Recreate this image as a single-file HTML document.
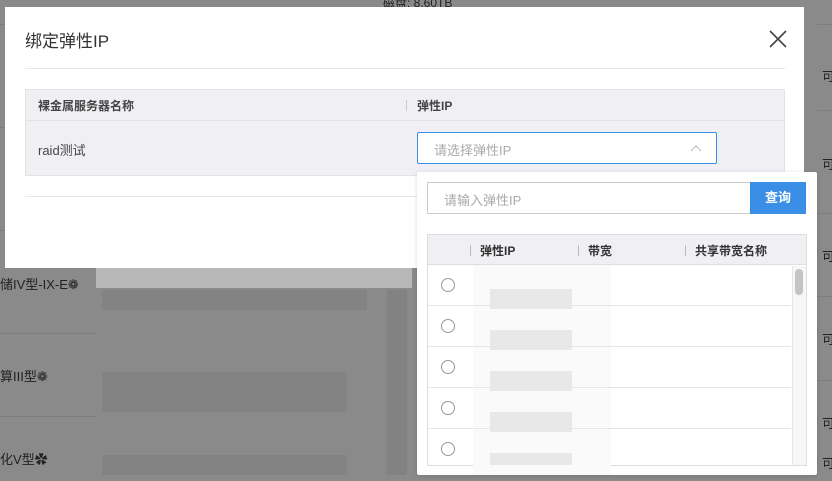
<!DOCTYPE html>
<html><head><meta charset="utf-8"><style>
*{margin:0;padding:0;box-sizing:border-box}
body{width:832px;height:481px;overflow:hidden;background:#8a8a8a;font-family:"Liberation Sans","Noto Sans CJK SC",sans-serif;position:relative;font-size:13px;color:#333}
.a{position:absolute}
.bgt{color:#222;font-size:13px}
.hl{height:1px;background:#7d7d7d}
.blk{background:#7f7f7f}
</style></head><body>
<!-- background -->
<div class="a hl" style="left:0;top:24px;width:96px"></div>
<div class="a hl" style="left:0;top:127px;width:96px"></div>
<div class="a hl" style="left:0;top:230px;width:96px"></div>
<div class="a hl" style="left:0;top:333px;width:96px"></div>
<div class="a hl" style="left:0;top:416px;width:96px"></div>
<div class="a hl" style="left:817px;top:24px;width:15px"></div>
<div class="a hl" style="left:817px;top:110px;width:15px"></div>
<div class="a hl" style="left:817px;top:213px;width:15px"></div>
<div class="a hl" style="left:817px;top:296px;width:15px"></div>
<div class="a hl" style="left:817px;top:380px;width:15px"></div>
<div class="a bgt" style="left:0;top:274px">储IV型-IX-E❁</div>
<div class="a bgt" style="left:0;top:366px">算III型❁</div>
<div class="a bgt" style="left:0;top:449px">化V型✿</div>
<div class="a bgt" style="left:822px;top:66px">可</div>
<div class="a bgt" style="left:822px;top:154px">可</div>
<div class="a bgt" style="left:822px;top:246px">可</div>
<div class="a bgt" style="left:822px;top:329px">可</div>
<div class="a bgt" style="left:822px;top:413px">可</div>
<div class="a bgt" style="left:822px;top:453px">可</div>
<div class="a" style="left:96px;top:268px;width:316px;height:20px;background:#b8b8b8"></div>
<div class="a blk" style="left:102px;top:290px;width:265px;height:20px;opacity:.6"></div>
<div class="a blk" style="left:102px;top:372px;width:245px;height:40px;opacity:.6"></div>
<div class="a blk" style="left:102px;top:455px;width:245px;height:20px;opacity:.6"></div>
<div class="a blk" style="left:387px;top:290px;width:20px;height:185px;opacity:.7"></div>
<div class="a bgt" style="left:383px;top:0;font-size:12px;line-height:7px">磁盘: 8.60TB</div>
<!-- modal -->
<div class="a" style="left:5px;top:7px;width:799px;height:261px;background:#fff">
 <div class="a" style="left:20px;top:20px;font-size:17px;color:#333">绑定弹性IP</div>
 <svg class="a" style="left:763px;top:22px" width="20" height="20"><path d="M2 2L18 18M18 2L2 18" stroke="#444" stroke-width="1.6"/></svg>
 <div class="a" style="left:20px;top:61px;width:760px;height:1px;background:#e8e8e8"></div>
 <div class="a" style="left:20px;top:82px;width:760px;height:87px;border:1px solid #e3e3e6;background:#f0f0f4">
  <div class="a" style="left:0;top:30px;width:758px;height:1px;background:#e3e3e6"></div>
  <div class="a" style="left:12px;top:7px;font-weight:bold;font-size:12px;color:#444">裸金属服务器名称</div>
  <div class="a" style="left:380px;top:10px;width:1px;height:11px;background:#ccc"></div>
  <div class="a" style="left:391px;top:7px;font-weight:bold;font-size:12px;color:#444">弹性IP</div>
  <div class="a" style="left:12px;top:50px;font-size:13px;color:#444">raid测试</div>
  <div class="a" style="left:391px;top:42px;width:300px;height:32px;border:1px solid #3a8ee6;background:#fff;border-radius:2px">
   <div class="a" style="left:16px;top:7px;color:#aaa;font-size:13px">请选择弹性IP</div>
   <svg class="a" style="left:272px;top:11px" width="12" height="8"><path d="M1 7L6 2L11 7" stroke="#bbb" fill="none"/></svg>
  </div>
 </div>
 <div class="a" style="left:20px;top:189px;width:760px;height:1px;background:#e8e8e8"></div>
</div>
<!-- dropdown -->
<div class="a" style="left:417px;top:172px;width:400px;height:303px;background:#fff;border-radius:2px;box-shadow:0 1px 4px rgba(0,0,0,.15)">
 <div class="a" style="left:10px;top:10px;width:323px;height:32px;border:1px solid #ccc;border-right:none">
  <div class="a" style="left:16px;top:7px;color:#aaa;font-size:13px">请输入弹性IP</div>
 </div>
 <div class="a" style="left:333px;top:10px;width:56px;height:32px;background:#3a8ee6;color:#fff;font-size:13px;text-align:center;line-height:32px;font-weight:bold">查询</div>
 <div class="a" style="left:10px;top:62px;width:380px;height:232px;border:1px solid #ddd;overflow:hidden">
  <div class="a" style="left:0;top:0;width:380px;height:30px;background:#f0f0f4;border-bottom:1px solid #ddd"></div>
  <div class="a" style="left:42px;top:10px;width:1px;height:11px;background:#bbb"></div>
  <div class="a" style="left:52px;top:7px;font-weight:bold;font-size:12px;color:#333">弹性IP</div>
  <div class="a" style="left:150px;top:10px;width:1px;height:11px;background:#bbb"></div>
  <div class="a" style="left:160px;top:7px;font-weight:bold;font-size:12px;color:#333">带宽</div>
  <div class="a" style="left:257px;top:10px;width:1px;height:11px;background:#bbb"></div>
  <div class="a" style="left:267px;top:7px;font-weight:bold;font-size:12px;color:#333">共享带宽名称</div>
  <div class="a" style="left:364px;top:31px;width:16px;height:201px;background:#f7f7f7;border-left:1px solid #e6e6e6"></div>
  <div class="a" style="left:367px;top:34px;width:8px;height:26px;background:#c4c4c4;border-radius:4px"></div>
 </div>
 <div class="a" style="left:56px;top:93px;width:138px;height:210px;background:#fafafa"></div>
 <!-- rows -->
 <div class="a" style="left:11px;top:92px;width:363px;height:210px">
  <div class="a" style="left:13px;top:14px;width:14px;height:14px;border:1px solid #999;border-radius:50%"></div>
  <div class="a" style="left:62px;top:25px;width:82px;height:20px;background:#e8e8e8"></div>
  <div class="a" style="left:0;top:41px;width:363px;height:1px;background:#e6e6e6"></div>
  <div class="a" style="left:13px;top:55px;width:14px;height:14px;border:1px solid #999;border-radius:50%"></div>
  <div class="a" style="left:62px;top:66px;width:82px;height:20px;background:#e8e8e8"></div>
  <div class="a" style="left:0;top:82px;width:363px;height:1px;background:#e6e6e6"></div>
  <div class="a" style="left:13px;top:96px;width:14px;height:14px;border:1px solid #999;border-radius:50%"></div>
  <div class="a" style="left:62px;top:107px;width:82px;height:20px;background:#e8e8e8"></div>
  <div class="a" style="left:0;top:123px;width:363px;height:1px;background:#e6e6e6"></div>
  <div class="a" style="left:13px;top:137px;width:14px;height:14px;border:1px solid #999;border-radius:50%"></div>
  <div class="a" style="left:62px;top:148px;width:82px;height:20px;background:#e8e8e8"></div>
  <div class="a" style="left:0;top:164px;width:363px;height:1px;background:#e6e6e6"></div>
  <div class="a" style="left:13px;top:178px;width:14px;height:14px;border:1px solid #999;border-radius:50%"></div>
  <div class="a" style="left:62px;top:189px;width:82px;height:12px;background:#e8e8e8"></div>
 </div>
</div>
</body></html>
